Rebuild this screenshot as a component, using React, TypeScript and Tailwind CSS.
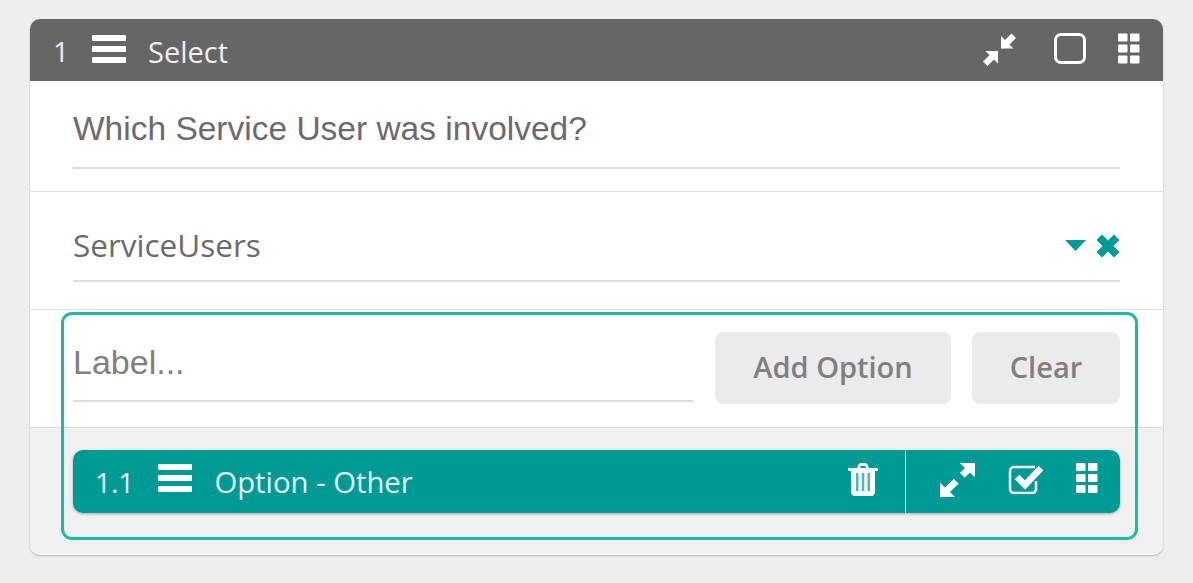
import React from 'react';

const Bars = ({ className }: { className?: string }) => (
  <svg viewBox="0 0 34 28" className={className} fill="currentColor">
    <rect x="0" y="0" width="34" height="6" rx="1" />
    <rect x="0" y="11" width="34" height="6" rx="1" />
    <rect x="0" y="22" width="34" height="6" rx="1" />
  </svg>
);

const Grip = ({ className }: { className?: string }) => (
  <svg viewBox="0 0 22 30" className={className} fill="currentColor">
    {[0, 11, 22].map((y) => (
      <React.Fragment key={y}>
        <rect x="0" y={y} width="9.5" height="8" rx="1" />
        <rect x="12" y={y} width="9.5" height="8" rx="1" />
      </React.Fragment>
    ))}
  </svg>
);

const Compress = ({ className }: { className?: string }) => (
  <svg viewBox="0 0 33 33" className={className} fill="currentColor">
    <path d="M18 3l4 4 6.500-6.500L33 5l-6.500 6.500 4 4H18z" />
    <path d="M15 18v12.500l-4-4L4.500 33 0 28.500 6.500 22l-4-4z" />
  </svg>
);

const Expand = ({ className }: { className?: string }) => (
  <svg viewBox="0 0 36 34" className={className} fill="currentColor">
    <path d="M21 0h15v14.500l-5-5L11 29l5 5H1V19.500l5 5L26 5z" />
    <path d="M14 15l6-6 6 6-6 6z" fill="#009a96" />
  </svg>
);

const Trash = ({ className }: { className?: string }) => (
  <svg viewBox="0 0 30 33" className={className} fill="currentColor">
    <path d="M10 2.500C10.500 1 11.500 0 13 0h4c1.500 0 2.500 1 3 2.500L21 5h8c.6 0 1 .4 1 1v2H27v21c0 2.200-1.500 4-3.500 4h-17C4.500 33 3 31.200 3 29V8H0V6c0-.6.4-1 1-1h8zM12 5h6l-.8-2h-4.400z" />
    <path d="M8 10h2.500v18H8zM13.800 10h2.500v18h-2.500zM19.500 10H22v18h-2.500z" fill="#009a96" opacity="0.7" />
  </svg>
);

const CheckSquare = ({ className }: { className?: string }) => (
  <svg viewBox="0 0 36 30" className={className} fill="none" stroke="currentColor">
    <path d="M27 3H6a4 4 0 0 0-4 4v18a4 4 0 0 0 4 4h18a4 4 0 0 0 4-4v-8" strokeWidth="2.500" />
    <path d="M9 13l8 8L33 4" strokeWidth="6.500" />
  </svg>
);

const App = () => {
  return (
    <div className="min-h-[583px] bg-[#eeeeee] px-[30px] pt-[19px] font-['Open_Sans',sans-serif]">
      <div className="relative h-[536px] w-[1133px] rounded-[10px] bg-white shadow-[0_1px_2px_rgba(0,0,0,0.25)]">
        <header className="flex h-[62px] items-center rounded-t-[10px] bg-[#666666] pl-[23px] pr-[23px] text-white">
          <span className="translate-y-[1px] text-[28px] leading-none text-[#eeeeee]">1</span>
          <Bars className="ml-[23px] h-[28px] w-[34px] -translate-y-[1px]" />
          <span className="ml-[22px] translate-y-[1px] text-[29px] leading-none text-[#eeeeee]">Select</span>
          <div className="ml-auto flex items-center">
            <Compress className="h-[33px] w-[33px] -translate-y-[1px]" />
            <div className="ml-[38px] h-[31px] w-[32px] -translate-y-[2px] rounded-[7px] border-[3px] border-white" />
            <Grip className="ml-[32px] h-[31px] w-[22px] -translate-y-[2px]" />
          </div>
        </header>

        <section className="h-[111px] border-b border-[#dddddd] px-[43px] pt-[26px]">
          <div className="h-[62px] border-b-2 border-[#dddddd] font-['Liberation_Sans',sans-serif] text-[33.500px] leading-[44px] text-[#6b6b6b]">
            Which Service User was involved?
          </div>
        </section>

        <section className="h-[118px] border-b border-[#dddddd] px-[43px] pt-[32px]">
          <div className="flex h-[58px] items-start justify-between border-b-2 border-[#dddddd]">
            <span className="-translate-y-[1px] text-[31.500px] leading-[44px] text-[#6b6b6b]">ServiceUsers</span>
            <div className="mt-[10px] flex items-center text-[#009a96]">
              <svg viewBox="0 0 21 11" className="h-[11px] w-[21px] -translate-x-[1px] -translate-y-[1px]" fill="currentColor">
                <path d="M0 0h21L10.500 11z" />
              </svg>
              <svg viewBox="0 0 24 24" className="ml-[9px] h-[24px] w-[24px]" fill="currentColor">
                <path d="M6 0.500L12 6.500l6-6L23.500 6l-6 6 6 6-5.500 5.500-6-6-6 6L.5 18l6-6-6-6z" />
              </svg>
            </div>
          </div>
        </section>

        <section className="flex h-[118px] items-start border-b border-[#dddddd] px-[43px] pt-[22px]">
          <div className="h-[70px] w-[620px] border-b-2 border-[#dddddd] font-['Liberation_Sans',sans-serif] text-[34px] leading-[60px] text-[#808080]">
            Label...
          </div>
          <button className="ml-[22px] h-[72px] w-[236px] rounded-[8px] bg-[#ebebeb] pb-[2px] text-[29px] font-semibold text-[#808080]">
            Add Option
          </button>
          <button className="ml-[21px] h-[72px] w-[148px] rounded-[8px] bg-[#ebebeb] pb-[2px] text-[29px] font-semibold text-[#808080]">
            Clear
          </button>
        </section>

        <section className="h-[126px] rounded-b-[10px] bg-[#f0f0f0] px-[43px] pt-[22px]">
          <div className="flex h-[63px] items-center rounded-[10px] bg-[#009a96] pl-[22px] text-white shadow-[0_1px_3px_rgba(0,0,0,0.3)]">
            <span className="text-[28px] leading-none text-[#e3f3f2]">1.1</span>
            <Bars className="ml-[24px] h-[28px] w-[34px] -translate-y-[4px]" />
            <span className="ml-[22px] translate-y-[1px] text-[29.300px] leading-none text-[#e3f3f2]">Option - Other</span>
            <div className="ml-auto flex h-full items-center">
              <Trash className="h-[33px] w-[30px] -translate-y-[2px]" />
              <div className="ml-[27px] h-full w-px bg-[#9fd8d6]" />
              <Expand className="ml-[33px] h-[34px] w-[36px] -translate-y-[2px]" />
              <CheckSquare className="ml-[33px] h-[30px] w-[36px] -translate-y-[3px]" />
              <Grip className="ml-[32px] mr-[22px] h-[30px] w-[22px] -translate-y-[4px]" />
            </div>
          </div>
        </section>

        {/* highlight drawn over the lower sections */}
        <div className="pointer-events-none absolute left-[31px] top-[293px] h-[228px] w-[1077px] rounded-[11px] border-[3px] border-[#1abc9c]" />
      </div>
    </div>
  );
};

export default App;
